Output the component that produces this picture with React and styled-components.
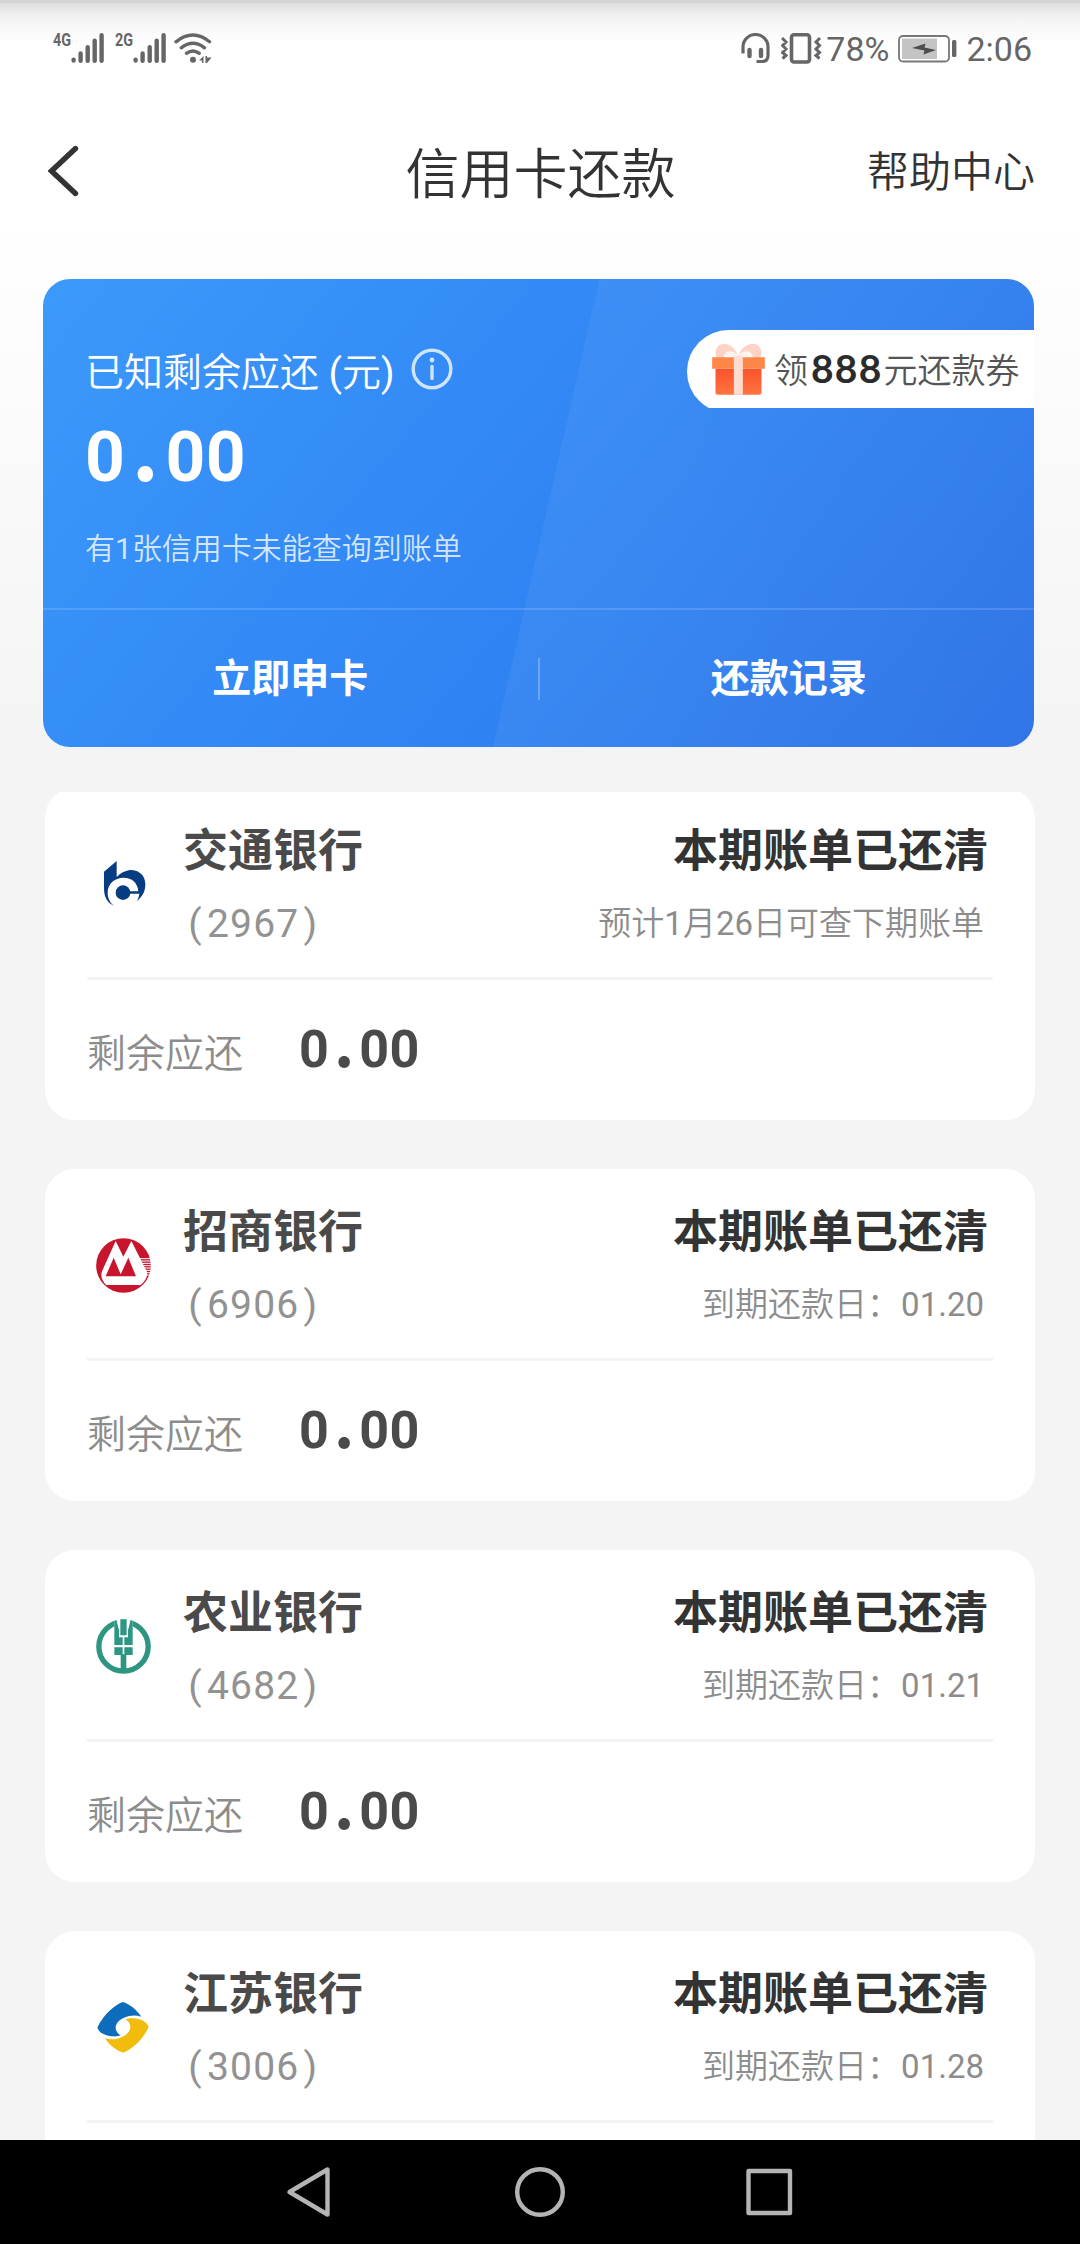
import styled, { createGlobalStyle } from "styled-components";

const GlobalStyle = createGlobalStyle`
  * {
    box-sizing: border-box;
  }
  body {
    margin: 0;
    background-color: #f4f4f4;
    font-family: Roboto, "Noto Sans CJK SC", sans-serif;
  }
`;

const Container = styled.div`
  width: 1080px;
  height: 2244px;
  display: flex;
  flex-direction: column;
  overflow: hidden;
  background: linear-gradient(#ffffff 220px, #f4f4f4 740px);
`;

const StatusBar = styled.div`
  height: 96px;
  flex: none;
  padding: 30px 48px 0 53px;
  display: flex;
  align-items: flex-start;
  justify-content: space-between;
  border-top: 3px solid #d4d4d4;
  background: linear-gradient(#dedede, #f2f2f2 14px, #ffffff 38px);
  color: #666666;
`;
const StatusGroup = styled.div`
  display: flex;
  align-items: flex-start;
`;
const Network = styled.span`
  width: 18px;
  font-size: 18px;
  font-weight: 700;
  line-height: 13px;
  transform: scaleX(0.8);
  transform-origin: left;
`;
const Signal = styled.svg`
  width: 33px;
  height: 30px;
  margin-right: ${(props) => props.$gap}px;
`;
const StatusIcon = styled.svg`
  display: block;
  margin-right: ${(props) => props.$gap || 0}px;
`;
const StatusText = styled.span`
  font-size: 34px;
  line-height: 33px;
  margin-right: ${(props) => props.$gap || 0}px;
`;

const Header = styled.div`
  height: 183px;
  flex: none;
  padding: 0 45px 33px 48px;
  display: grid;
  grid-template-columns: 1fr auto 1fr;
  align-items: center;
  color: #333333;
`;
const Title = styled.h1`
  margin: 9px 2px 0 0;
  font-size: 54px;
  line-height: 70px;
  font-weight: 350;
`;
const Help = styled.span`
  margin-top: 4px;
  font-size: 42px;
  line-height: 54px;
  font-weight: 350;
  text-align: right;
`;

const Hero = styled.div`
  width: 991px;
  height: 468px;
  flex: none;
  margin-left: 43px;
  border-radius: 27px;
  overflow: hidden;
  display: flex;
  flex-direction: column;
  background:
    linear-gradient(102.8deg, transparent 50.65%, rgba(255, 255, 255, 0.05) 50.75%, rgba(255, 255, 255, 0.03) 100%),
    linear-gradient(130deg, #3c9afa 0%, #348bf6 35%, #2f82f2 60%, #2a70e6 100%);
  color: #ffffff;
`;
const HeroTop = styled.div`
  height: 329px;
  padding: 51px 0 0 42px;
  display: flex;
  justify-content: space-between;
`;
const Summary = styled.div`
  padding-top: 13px;
`;
const SummaryLabel = styled.div`
  height: 52px;
  margin-bottom: 21px;
  display: flex;
  align-items: center;
  gap: 17px;
  font-size: 39px;
  font-weight: 350;
`;
const Note = styled.div`
  margin-top: 30px;
  font-size: 30px;
  line-height: 40px;
  font-weight: 350;
  color: rgba(255, 255, 255, 0.78);
`;
// the CJK text is demi-light, its digits are regular
const Digits = styled.span`
  font-weight: 400;
  margin-left: ${(props) => props.$gap || 0}px;
`;

// the pill is a little taller than its window, so its lower edge is cut
const CouponWindow = styled.div`
  width: 347px;
  height: 78px;
  overflow: hidden;
`;
const Coupon = styled.div`
  height: 83px;
  padding: 0 0 6px 25px;
  display: flex;
  align-items: center;
  border-radius: 42px 0 0 42px;
  background-color: white;
  color: #555555;
  font-size: 34px;
  font-weight: 350;
  white-space: nowrap;
`;
const CouponText = styled.span`
  margin-left: 9px;
`;
const CouponValue = styled.b`
  margin: 0 1px 0 3px;
  font-family: Lato, sans-serif;
  font-size: 39px;
  font-weight: 700;
  letter-spacing: 1.2px;
  color: #2b2b2b;
`;

const Actions = styled.div`
  height: 139px;
  display: flex;
  align-items: center;
  border-top: 2px solid rgba(255, 255, 255, 0.14);
`;
const Action = styled.span`
  flex: 1;
  padding-bottom: 8px;
  text-align: center;
  text-indent: ${(props) => props.$indent || 0}px;
  font-size: 39px;
  font-weight: 700;
`;
const Separator = styled.i`
  width: 2px;
  height: 42px;
  background-color: rgba(255, 255, 255, 0.25);
`;

const Amount = styled.div`
  height: 1.2em;
  font-size: ${(props) => props.$size}px;
  line-height: 1.2;
  font-weight: 700;
  letter-spacing: ${(props) => props.$size * 0.006}px;
`;
const Point = styled.span`
  display: inline-block;
  width: 0.483em;
  text-align: center;
  font-family: "Noto Sans CJK SC", sans-serif;
  font-size: 1.2em;
  line-height: 0.4;
`;

const List = styled.div`
  flex: 1;
  min-height: 0;
  margin-top: 45px;
  overflow: hidden;
`;
const Card = styled.div`
  width: 990px;
  height: 332px;
  margin: 0 0 49px 45px;
  padding: 0 42px;
  border-radius: 30px;
  background-color: white;
  &:first-child {
    margin-top: -4px;
  }
`;
const CardHead = styled.div`
  height: 192px;
  padding: 37px 5px 0 9px;
  display: flex;
  border-bottom: 3px solid #f4f4f4;
`;
const Logo = styled.svg`
  width: 55px;
  height: 55px;
  margin: 32px 32px 0 0;
`;
const Column = styled.div`
  display: flex;
  flex-direction: column;
  gap: 23px;
  align-items: ${(props) => (props.$right ? "flex-end" : "flex-start")};
  margin-left: ${(props) => (props.$right ? "auto" : "0")};
`;
const Strong = styled.div`
  font-size: 45px;
  line-height: 54px;
  font-weight: 700;
  color: ${(props) => props.color};
`;
const CardNumber = styled.div`
  padding-left: 1px;
  font-size: 39px;
  line-height: 44px;
  letter-spacing: 1.2px;
  color: #929292;
`;
const Paren = styled.span`
  display: inline-block;
  width: 23px;
  text-align: center;
`;
const Due = styled.div`
  margin-right: 4px;
  font-size: 33px;
  line-height: 44px;
  font-weight: 350;
  color: #8c8c8c;
`;
const CardFoot = styled.div`
  height: 140px;
  padding-top: 1px;
  display: flex;
  align-items: center;
  color: #4a4a4a;
`;
const FootLabel = styled.span`
  width: 212px;
  padding-bottom: 2px;
  font-size: 39px;
  font-weight: 350;
  color: #8c8c8c;
`;

const NavBar = styled.div`
  height: 104px;
  flex: none;
  padding-left: 282px;
  display: flex;
  align-items: center;
  background-color: black;
`;
const NavIcon = styled.svg`
  width: 52px;
  height: 52px;
  margin-right: 179px;
  fill: none;
  stroke: #b4b4b4;
  stroke-width: 4.4;
  stroke-linejoin: round;
`;

const SignalBars = ({ gap }) => (
  <Signal $gap={gap} viewBox="0 0 33 30" fill="none" stroke="#666" strokeWidth="4.4" strokeLinecap="round">
    <path d="M2.6 26.6v1M9.6 20.5v7.2M16.7 14.3v13.4M23.7 7.8v19.9M30.6 2.3v25.4" />
  </Signal>
);

const CommLogo = () => (
  <Logo viewBox="0 0 165 165" fill="#063d80">
    <path d="M24 44 62 12V60C77 45 92 39 107 39 132 41 148 57 148 82 148 107 137 121 122 133 127 125 129 117 130 110H98V103H127C125 77 107 62 84 62 54 62 35 81 35 107 35 124 42 137 55 147 36 139 24 124 24 94Z" />
    <circle cx="81" cy="107" r="22" />
  </Logo>
);
const MerchantsLogo = () => (
  <Logo viewBox="0 0 165 165">
    <circle cx="82.5" cy="82.5" r="82" fill="#c8152d" />
    <path d="M126 62h40M129 69h38M132 76h35M135 83h32M139 90h28M142 97h25M146 104h20M149 111h16" stroke="#fff" strokeWidth="3" />
    <path d="M18 100 59 9 82 56 106 9 152 100C157 112 148 130 134 141H30C20 130 12 116 18 100Z" fill="#fff" />
    <path d="M29 115 53 59 74 109 97 59 120 115Z" fill="#c8152d" />
  </Logo>
);
const AgriLogo = () => (
  <Logo viewBox="0 0 165 165" fill="#2e9583">
    <circle cx="82.5" cy="82.5" r="74" fill="none" stroke="#2e9583" strokeWidth="16" />
    <path d="M55 0h55v32H55z" fill="#fff" />
    <path d="M55 5v73h25V55H69V30L62 3zM110 5v73H85V55h11V30l7-27z" />
    <path d="M61 -1h43l-7 31H68z" fill="#fff" />
    <path d="M73 1h19v48H73zM55 85h25v23H55zM85 85h25v23H85zM74 106h17v52H74z" />
  </Logo>
);
const JiangsuLogo = () => (
  <Logo viewBox="0 0 165 165">
    <path fill="#0d6cbc" d="M81 6C60 12 22 42 4 83 10 98 24 106 48 109 58 110 68 109 74 106 58 98 54 78 66 66 78 52 108 40 136 50 120 28 104 14 81 6Z" />
    <path fill="#f2bc0c" transform="rotate(180 81 82)" d="M81 6C60 12 22 42 4 83 10 98 24 106 48 109 58 110 68 109 74 106 58 98 54 78 66 66 78 52 108 40 136 50 120 28 104 14 81 6Z" />
  </Logo>
);

const Gift = () => (
  <svg width="53" height="52" viewBox="0 0 158 156">
    <defs>
      <linearGradient id="giftBox" x1="0" y1="0" x2="0" y2="1">
        <stop offset="0" stopColor="#f9532c" />
        <stop offset="1" stopColor="#ff7440" />
      </linearGradient>
    </defs>
    <path d="M78 44C70 0 20-12 11 22 9 32 11 38 14 46H34C40 32 60 30 78 44ZM78 44C86 0 138-12 147 22 149 32 147 38 144 46H124C118 32 98 30 78 44Z" fill="#ffd2c6" />
    <path d="M34 40C38 20 64 20 78 38 92 20 118 20 122 40Z" fill="#fff3ef" />
    <path d="M10 77h138v72q0 6-6 6H16q-6 0-6-6z" fill="url(#giftBox)" />
    <path d="M0 43h158v34H0z" fill="#ff8649" />
    <path d="M65 38h27v117H65z" fill="#ffdccf" />
  </svg>
);

const cards = [
  {
    logo: CommLogo,
    bank: "交通银行",
    number: "2967",
    due: (
      <>
        预计<Digits>1</Digits>月<Digits>26</Digits>日可查下期账单
      </>
    ),
    open: true,
  },
  { logo: MerchantsLogo, bank: "招商银行", number: "6906", date: "01.20", open: true },
  { logo: AgriLogo, bank: "农业银行", number: "4682", date: "01.21", open: true },
  { logo: JiangsuLogo, bank: "江苏银行", number: "3006", date: "01.28", open: false },
];

const Money = ({ size }) => (
  <Amount $size={size}>
    0<Point>.</Point>00
  </Amount>
);

const BankCard = ({ item }) => {
  const BankLogo = item.logo;
  return (
    <Card>
      <CardHead>
        <BankLogo />
        <Column>
          <Strong color="#4a4a4a">{item.bank}</Strong>
          <CardNumber>
            <Paren>(</Paren>
            {item.number}
            <Paren>)</Paren>
          </CardNumber>
        </Column>
        <Column $right>
          <Strong color="#333333">本期账单已还清</Strong>
          <Due>
            {item.due || (
              <>
                到期还款日：<Digits $gap={1}>{item.date}</Digits>
              </>
            )}
          </Due>
        </Column>
      </CardHead>
      {item.open && (
        <CardFoot>
          <FootLabel>剩余应还</FootLabel>
          <Money size={52} />
        </CardFoot>
      )}
    </Card>
  );
};

const App = () => {
  return (
    <Container>
      <GlobalStyle />
      <StatusBar>
        <StatusGroup>
          <Network>4G</Network>
          <SignalBars gap={11} />
          <Network>2G</Network>
          <SignalBars gap={8} />
          <StatusIcon width="38" height="30" viewBox="0 0 38 30" fill="none" stroke="#666" strokeWidth="3.4" strokeLinecap="round">
            <path d="M2 8.8Q19-4.6 35.5 8.8M7.3 14.8Q19 5.6 30.5 14.8M12.5 20.3Q19 15.6 25.2 20.3" />
            <circle cx="19" cy="26.7" r="3" fill="#666" stroke="none" />
            <path d="M25 27.5l4.5-4.5v7H28v-2.5zM37.5 24.5 33 30h-1.500v-7H33v1.500z" fill="#666" stroke="none" />
          </StatusIcon>
        </StatusGroup>
        <StatusGroup>
          <StatusIcon $gap={11} width="29" height="30" viewBox="0 0 29 30" fill="none" stroke="#666" strokeWidth="3.2">
            <path d="M2 20.5V14A12.4 12.4 0 0 1 27 14v8.5q0 6-6 6h-5.5" />
            <path d="M8.5 17v6M20 17v6" strokeWidth="4.4" strokeLinecap="round" />
          </StatusIcon>
          <StatusIcon $gap={4} width="41" height="31" viewBox="0 0 41 31" fill="none" stroke="#666" strokeWidth="3.6">
            <rect x="10.5" y="1.8" width="18" height="27.2" rx="2.5" />
            <path d="M1 5l4 4-3.500 3.500 3.500 3.500-3.500 3.500 3.500 3-3.500 3M39 5l-4 4 3.500 3.500-3.500 3.500 3.500 3.500-3.500 3 3.500 3" strokeWidth="3" />
          </StatusIcon>
          <StatusText $gap={9}>78%</StatusText>
          <StatusIcon $gap={9} width="59" height="31" viewBox="0 0 59 31">
            <rect x="1" y="3" width="50" height="25.5" rx="4" fill="none" stroke="#777" strokeWidth="1.8" />
            <rect x="4" y="5.5" width="35" height="20.5" fill="#c4c4c4" />
            <path d="M14 15l13.500-4.500-1 4L38 17l-12.500 4.500 1-4z" fill="#4d4d4d" />
            <rect x="54" y="7" width="4.4" height="17" rx="1.5" fill="#666" />
          </StatusIcon>
          <StatusText>2:06</StatusText>
        </StatusGroup>
      </StatusBar>

      <Header>
        <svg width="32" height="52" viewBox="0 0 32 52" fill="none" stroke="#333" strokeWidth="5.4" strokeLinecap="round">
          <path d="M27.5 3.5 3.5 26l24 22.500" />
        </svg>
        <Title>信用卡还款</Title>
        <Help>帮助中心</Help>
      </Header>

      <Hero>
        <HeroTop>
          <Summary>
            <SummaryLabel>
              <span>
                已知剩余应还 <Digits>(</Digits>元<Digits>)</Digits>
              </span>
              <svg width="42" height="42" viewBox="0 0 42 42" fill="none" stroke="#cfe5ff" strokeWidth="3.4">
                <circle cx="21" cy="21" r="18.8" />
                <path d="M21 18.5v12" strokeLinecap="round" />
                <circle cx="21" cy="12" r="2.4" fill="#cfe5ff" stroke="none" />
              </svg>
            </SummaryLabel>
            <Money size={69.5} />
            <Note>
              有<Digits>1</Digits>张信用卡未能查询到账单
            </Note>
          </Summary>
          <CouponWindow>
            <Coupon>
              <Gift />
              <CouponText>
                领<CouponValue>888</CouponValue>元还款券
              </CouponText>
            </Coupon>
          </CouponWindow>
        </HeroTop>
        <Actions>
          <Action>立即申卡</Action>
          <Separator />
          <Action $indent={4}>还款记录</Action>
        </Actions>
      </Hero>

      <List>
        {cards.map((item) => (
          <BankCard item={item} key={item.number} />
        ))}
      </List>

      <NavBar>
        <NavIcon viewBox="0 0 52 52">
          <path d="M45.5 3.5v45L7.5 26z" />
        </NavIcon>
        <NavIcon viewBox="0 0 52 52">
          <circle cx="27" cy="26" r="22.8" />
        </NavIcon>
        <NavIcon viewBox="0 0 52 52">
          <rect x="4.5" y="5" width="41.5" height="42" />
        </NavIcon>
      </NavBar>
    </Container>
  );
};

export default App;
